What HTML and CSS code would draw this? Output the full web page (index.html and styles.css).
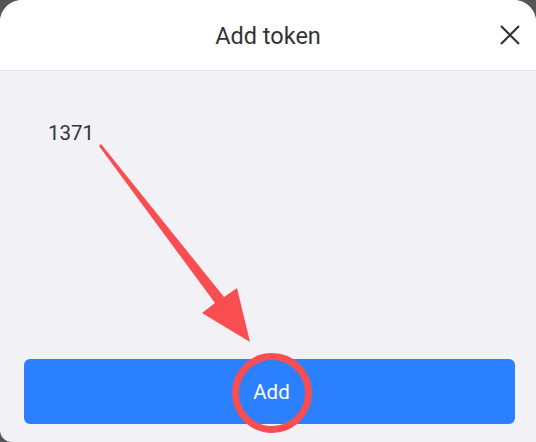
FILE: index.html
```html
<!DOCTYPE html>
<html>
<head>
<meta charset="utf-8">
<link rel="stylesheet" href="styles.css">
</head>
<body>
<div class="sheet">
  <header class="head">
    <h1 class="title">Add token</h1>
    <button class="close" aria-label="Close">
      <svg width="22" height="22" viewBox="0 0 22 22"><path d="M2 2 L20 20 M20 2 L2 20" stroke="#333" stroke-width="2.2" fill="none"/></svg>
    </button>
  </header>
  <main class="content">
    <div class="value">1371</div>
    <div class="spacer"></div>
    <button class="add">Add</button>
  </main>
  <svg class="annot" width="536" height="442" viewBox="0 0 536 442">
    <polygon points="99,146 101,144 224,297 237,288 250,342 202,313 215,303" fill="#f84e52"/>
    <circle cx="272" cy="393" r="36.5" fill="none" stroke="#f84e52" stroke-width="7"/>
  </svg>
</div>
</body>
</html>
```
FILE: styles.css
```css
html, body {
  margin: 0;
  padding: 0;
  background: #555;
  width: 536px;
  height: 442px;
  overflow: hidden;
}
.sheet {
  position: relative;
  width: 536px;
  height: 442px;
  background: #f1f1f6;
  border-radius: 22px 22px 0 12px;
  overflow: hidden;
  display: flex;
  flex-direction: column;
  font-family: Roboto, "Noto Sans", sans-serif;
}
.head {
  height: 70px;
  flex: none;
  background: #fff;
  border-bottom: 1px solid #e4e4e8;
  display: flex;
  align-items: center;
  justify-content: center;
  position: relative;
}
.title {
  margin: 0;
  font-weight: 400;
  font-size: 23.5px;
  color: #333;
  padding-top: 1px;
}
.close {
  position: absolute;
  right: 15px;
  top: 24px;
  width: 22px;
  height: 22px;
  padding: 0;
  border: 0;
  background: none;
  display: flex;
}
.content {
  flex: 1;
  display: flex;
  flex-direction: column;
  padding: 50px 21px 18px 24px;
}
.value {
  font-size: 20.5px;
  color: #333;
  padding-left: 24px;
}
.spacer { flex: 1; }
.add {
  height: 65px;
  border: 0;
  border-radius: 6px;
  background: #2a80ff;
  color: #fff;
  font-family: Roboto, "Noto Sans", sans-serif;
  font-size: 20.5px;
  padding: 0 0 0 4px;
}
.annot {
  position: absolute;
  left: 0;
  top: 0;
  pointer-events: none;
}
```
